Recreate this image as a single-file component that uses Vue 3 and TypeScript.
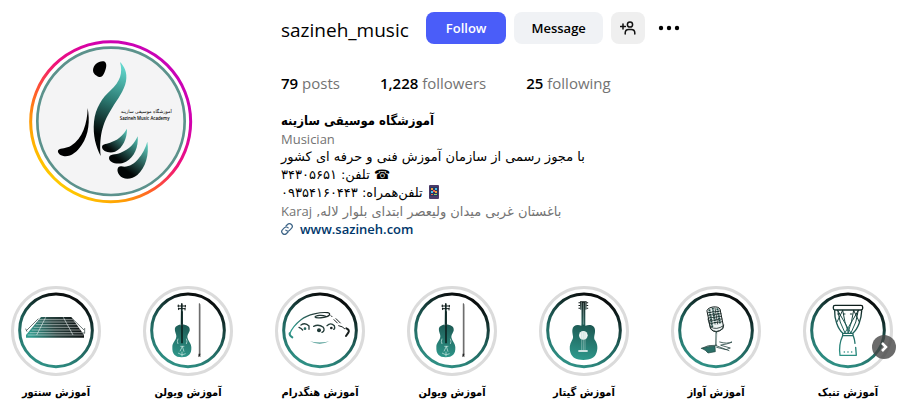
<script setup lang="ts">
type Kind = 'santur' | 'violin' | 'handpan' | 'guitar' | 'mic' | 'tonbak'
interface Highlight {
  kind: Kind
  label: string
}

const stats: { value: string; label: string }[] = [
  { value: '79', label: 'posts' },
  { value: '1,228', label: 'followers' },
  { value: '25', label: 'following' },
]

const highlights: Highlight[] = [
  { kind: 'santur', label: 'آموزش سنتور' },
  { kind: 'violin', label: 'آموزش ویولن' },
  { kind: 'handpan', label: 'آموزش هنگدرام' },
  { kind: 'violin', label: 'آموزش ویولن' },
  { kind: 'guitar', label: 'آموزش گیتار' },
  { kind: 'mic', label: 'آموزش آواز' },
  { kind: 'tonbak', label: 'آموزش تنبک' },
]
</script>

<template>
  <main class="profile">
    <svg class="defs" width="0" height="0" aria-hidden="true">
      <defs>
        <linearGradient id="ring" gradientUnits="userSpaceOnUse" x1="175" y1="40" x2="95" y2="235">
          <stop offset="0" stop-color="#0b0f0f" />
          <stop offset="0.5" stop-color="#1f5f59" />
          <stop offset="1" stop-color="#2f8f84" />
        </linearGradient>
        <linearGradient id="body" gradientUnits="userSpaceOnUse" x1="150" y1="50" x2="115" y2="220">
          <stop offset="0" stop-color="#0b1413" />
          <stop offset="0.4" stop-color="#1d5a54" />
          <stop offset="1" stop-color="#2f9a8d" />
        </linearGradient>
        <linearGradient id="wide" gradientUnits="userSpaceOnUse" x1="60" y1="150" x2="200" y2="100">
          <stop offset="0" stop-color="#2f9a8d" />
          <stop offset="0.5" stop-color="#28423f" />
          <stop offset="1" stop-color="#0d1212" />
        </linearGradient>
      </defs>
    </svg>

    <header class="top">
      <svg class="avatar" viewBox="27 29 492 492" role="img" aria-label="sazineh_music">
        <defs>
          <linearGradient id="story" gradientUnits="userSpaceOnUse" x1="430" y1="80" x2="110" y2="460">
            <stop offset="0" stop-color="#c804b8" />
            <stop offset="0.2" stop-color="#d200ad" />
            <stop offset="0.45" stop-color="#f0127a" />
            <stop offset="0.65" stop-color="#ff5a2c" />
            <stop offset="0.82" stop-color="#ff9c04" />
            <stop offset="1" stop-color="#ffcb00" />
          </linearGradient>
          <linearGradient id="stem" gradientUnits="userSpaceOnUse" x1="310" y1="110" x2="232" y2="310">
            <stop offset="0" stop-color="#62d6cc" />
            <stop offset="0.5" stop-color="#2c7a72" />
            <stop offset="1" stop-color="#020606" />
          </linearGradient>
          <linearGradient id="leaf1" gradientUnits="userSpaceOnUse" x1="318" y1="300" x2="270" y2="358">
            <stop offset="0" stop-color="#55c2b6" />
            <stop offset="1" stop-color="#020606" />
          </linearGradient>
          <linearGradient id="leaf2" gradientUnits="userSpaceOnUse" x1="352" y1="325" x2="300" y2="392">
            <stop offset="0" stop-color="#4db9ad" />
            <stop offset="1" stop-color="#020606" />
          </linearGradient>
          <linearGradient id="leaf3" gradientUnits="userSpaceOnUse" x1="382" y1="345" x2="325" y2="425">
            <stop offset="0" stop-color="#5dcabd" />
            <stop offset="1" stop-color="#020606" />
          </linearGradient>
        </defs>
        <circle cx="272" cy="274" r="240" fill="#fff" stroke="url(#story)" stroke-width="9" />
        <circle cx="273" cy="273" r="221" fill="#f4f4f5" stroke="#5c928c" stroke-width="8" />
        <path d="M219 119C220 103 236 91 251 93C262 96 260 112 254 125C250 136 243 143 235 139C227 135 219 130 219 119Z" />
        <path fill="url(#stem)" d="M300 95C312 107 323 126 318 153C313 181 293 206 275 235C253 270 236 308 242 377C228 350 218 315 222 274C226 234 247 202 272 180C301 153 309 128 300 95Z" />
        <path d="M203 233C210 272 207 312 185 344C171 366 150 381 130 377C117 375 111 364 115 359C123 352 139 355 153 346C188 325 202 279 203 233Z" />
        <path fill="url(#leaf1)" d="M321 295C321 325 309 352 285 364C268 371 246 362 246 350C247 339 262 342 275 335C300 326 312 309 321 295Z" />
        <path fill="url(#leaf2)" d="M353 318C356 350 343 381 318 394C297 405 267 399 267 383C268 369 287 374 302 367C327 358 344 339 353 318Z" />
        <path fill="url(#leaf3)" d="M382 334C388 373 377 412 352 434C336 447 310 450 298 434C289 422 291 407 304 408C323 413 341 402 354 387C368 371 376 354 382 334Z" />
        <text class="logo-fa" x="379" y="248" text-anchor="middle">آموزشگاه موسیقی سازینه</text>
        <text class="logo-en" x="374" y="270" text-anchor="middle">Sazineh Music Academy</text>
      </svg>

      <section class="info">
        <div class="title">
          <h1>sazineh_music</h1>
          <div class="actions">
            <button class="btn follow" type="button">Follow</button>
            <button class="btn message" type="button">Message</button>
            <button class="btn add" type="button" aria-label="Similar accounts">
              <svg width="16" height="16" viewBox="0 0 16 16" fill="none" stroke="#111" stroke-width="1.5" stroke-linecap="round">
                <circle cx="10" cy="4.5" r="2.6" />
                <path d="M5.2 14v-1c0-2.2 1.5-3.5 3.5-3.5h2.6c2 0 3.5 1.3 3.5 3.5v1M3 4v5M.6 6.5h4.8" />
              </svg>
            </button>
            <button class="more" type="button" aria-label="Options">
              <svg width="22" height="6" viewBox="0 0 22 6"><circle cx="3" cy="3" r="2.2" /><circle cx="11" cy="3" r="2.2" /><circle cx="19" cy="3" r="2.2" /></svg>
            </button>
          </div>
        </div>

        <ul class="stats">
          <li v-for="s in stats" :key="s.label"><b>{{ s.value }}</b> {{ s.label }}</li>
        </ul>

        <div class="bio">
          <p class="fa strong" dir="rtl">آموزشگاه موسیقی سازینه</p>
          <p class="muted">Musician</p>
          <p class="fa" dir="rtl">با مجوز رسمی از سازمان آموزش فنی و حرفه ای کشور</p>
          <p class="fa" dir="rtl"><span class="tel">☎</span> تلفن: ۳۴۳۰۵۶۵۱</p>
          <p class="fa" dir="rtl">
            <svg class="phone" width="14" height="14" viewBox="0 0 14 14" aria-hidden="true">
              <rect x="2" width="10" height="14" rx="1" fill="#4a3a68" />
              <rect x="3" y="2" width="8" height="9" fill="#29375f" />
              <path fill="#f3a13b" d="M4 3h2v2H4zM8 6h2v2H8z" />
              <path fill="#4fc0e8" d="M8 3h2v2H8zM4 6h2v2H4z" />
              <path fill="#e8604c" d="M6 5h2v2H6zM4 9h2v1H4z" />
              <path fill="#8fd06a" d="M7 9h3v1H7z" />
            </svg>
            تلفن‌همراه: ۰۹۳۵۴۱۶۰۴۴۳
          </p>
          <p class="fa muted" dir="rtl">باغستان غربی میدان ولیعصر ابتدای بلوار لاله, <span class="latin">Karaj</span></p>
          <a class="link" href="#">
            <svg width="12" height="12" viewBox="0 0 12 12" fill="none" stroke="#3c6386" stroke-width="1.2" stroke-linecap="round">
              <path d="M5 3l1.5-1.5a2.7 2.7 0 0 1 3.9 3.9L8.5 7.3a2.6 2.6 0 0 1-3.7-.1M7 9l-1.5 1.5a2.7 2.7 0 0 1-3.9-3.9l1.9-1.9a2.6 2.6 0 0 1 3.7.1" />
            </svg>
            <span>www.sazineh.com</span>
          </a>
        </div>
      </section>
    </header>

    <nav class="highlights" aria-label="Highlights">
      <a v-for="(h, i) in highlights" :key="i" class="highlight" href="#">
        <svg class="cover" viewBox="0 0 270 270" aria-hidden="true">
          <circle cx="135" cy="135" r="130.5" fill="#fff" stroke="#dbdbdb" stroke-width="9" />
          <circle cx="135" cy="133" r="109" fill="none" stroke="url(#ring)" stroke-width="9" />

          <g v-if="h.kind === 'santur'">
            <path fill="url(#wide)" d="M90 93H181L219 147V155H45V147Z" />
            <path fill="none" stroke="#fff" stroke-opacity=".75" stroke-width="2" d="M84 101H187M79 108H192M74 116H197M68 124H203M62 132H208M56 140H214M50 147H218" />
            <path fill="none" stroke="#dfe9e8" stroke-width="2" d="M104 94L77 147M157 94L186 147" />
            <path fill="none" stroke="#4e5b5a" stroke-width="2.5" d="M82 98L45 135M44 128l4 9M184 98L219 132M221 126v16M213 141h9" />
          </g>

          <g v-else-if="h.kind === 'violin'">
            <path fill="url(#body)" d="M114 53q2-4 5 0v65h-6zM107 117C98 120 94 125 96 135C98 144 102 148 99 157C95 167 88 171 88 184C87 204 96 214 116 214C137 214 146 204 145 184C144 171 137 167 134 157C131 148 137 143 140 134C142 124 135 119 127 117C120 115 113 115 107 117Z" />
            <path fill="none" stroke="#111c1b" stroke-width="3" stroke-linecap="round" d="M105 60h22M106 68h20M106 57v5M127 58v5M107 66v5M126 67v5" />
            <path fill="none" stroke="#0c2522" stroke-width="5" d="M117 76V172" />
            <path fill="none" stroke="#d6eeea" stroke-width="2" d="M112 181h12M118 181l-7 15M118 181l5 16M105 158q-4 8 0 16M130 158q4 8 0 16M105 201q12 10 23 2M117 197v14" />
            <path fill="none" stroke="#333" stroke-width="2.5" d="M169 53V209" />
            <path fill="none" stroke="#555" stroke-width="1.5" d="M168 51q4 2 4 10V206" />
            <path d="M167 203h5v11l-3-3-3 3z" fill="#222" />
          </g>

          <g v-else-if="h.kind === 'handpan'" fill="none" stroke-linecap="round">
            <path stroke="url(#wide)" stroke-width="3.5" d="M44 143C50 129 60 115 78 101C99 85 137 78 158 80C169 82 165 91 147 94C136 96 121 96 120 93C122 88 142 86 152 91" />
            <path stroke="#2f8f84" stroke-width="6" d="M44 142C43 146 47 151 52 154" />
            <path stroke="#1a2221" stroke-width="3" d="M177 101l10 10M183 98l13 13M191 119q12 2 18 9M168 89l3 3" />
            <path stroke="#161d1c" stroke-width="6" d="M214 127q11 5 6 13l-7 10" />
            <path stroke="#263f3c" stroke-width="4" d="M78 117q13-9 24 3v10M116 121q15-8 29 3 6 10-4 15M156 119q11-11 22 0 3 9-2 11M72 124q7 3 11 8" />
            <circle cx="90" cy="128" r="4" fill="#23645d" /><circle cx="132" cy="133" r="6" fill="#1e3936" /><circle cx="169" cy="126" r="4" fill="#1c2423" />
            <path fill="#46978f" d="M105 166Q134 173 163 166Q134 180 105 166Z" />
          </g>

          <g v-else-if="h.kind === 'guitar'">
            <path fill="url(#body)" d="M123 46h20l-1 25h-3v48c15-5 28-1 29 13 1 15-6 21 0 31 9 13 8 26 5 36-5 18-20 23-40 23s-34-6-39-23c-3-11-3-23 5-36 7-10 0-17 1-31 1-14 14-18 27-13V71h-3z" />
            <path fill="none" stroke="#c8dedb" stroke-width="1.5" d="M127 48v68M133 50v66M139 48v68" />
            <path fill="none" stroke="#0f1918" stroke-width="5" stroke-dasharray="3 5" d="M121 49v20M145 49v20" />
            <circle cx="133" cy="148" r="13" fill="#eef5f4" />
            <path fill="none" stroke="#b9d6d2" stroke-width="1.5" d="M128 137v56M133 137v56M138 137v56" />
            <path stroke="#eef5f4" stroke-width="5" d="M118 195h28" />
          </g>

          <g v-else-if="h.kind === 'mic'" fill="none" stroke-linecap="round">
            <path fill="#eef4f3" stroke="#17211f" stroke-width="3" d="M108 73C111 62 141 58 147 69L157 119C156 137 126 144 119 128Z" />
            <path stroke="#1d4640" stroke-width="6" stroke-dasharray="5 2" stroke-linecap="butt" d="M115 70l9 53M125 66l8 49M139 67l8 45" />
            <path stroke="#1c2e2b" stroke-width="2.5" d="M111 80l37-5M112 88l38-5M114 96l37-5M116 104l37-5M118 112l36-5M132 66l8 48M119 123q18 11 38-4M111 99l8 29q15 17 37 0l2-11" />
            <path stroke="#45625e" stroke-width="5" d="M136 139l-1 39" />
            <path stroke="#fff" stroke-width="1.5" d="M136 143v31" />
            <path fill="#2b6f67" stroke="#1d4640" stroke-width="2" d="M92 187q20-7 40-7l1 17-22 4q-5-8-19-14Z" />
            <path stroke="#2e4d49" stroke-width="2.5" d="M92 187q21-12 41-9l41 16M137 184l28 7 13-5-28-8M146 168q23 7 36 0M150 177q18-2 32-8" />
          </g>

          <g v-else fill="none" stroke="url(#body)" stroke-width="4" stroke-linejoin="round" stroke-linecap="round">
            <rect x="91" y="58" width="88" height="14" rx="5" />
            <path d="M95 74C94 98 104 129 119 141M176 74C175 100 165 129 150 141M119 142h31v7h-31zM119 149C111 166 108 188 111 208H160L158 184M151 150q4 10 5 22" />
            <path stroke-width="3" d="M104 73q4 36 22 68M166 73q-4 36-22 68M104 73q14 25 39 67M166 73q-15 27-40 67M119 73q5 36 17 67M152 73q-5 37-17 67M119 73l-17 35M152 73l17 35M104 84h5M121 84h5M142 84h5M159 84h5" />
            <path stroke="#2f8f84" stroke-width="5" d="M124 198h0M135 198h0M146 198h0" />
          </g>
        </svg>
        <span class="caption" dir="rtl">{{ h.label }}</span>
      </a>
      <button class="next" type="button" aria-label="Next">
        <svg width="24" height="24" viewBox="0 0 24 24" fill="none" stroke="#fff" stroke-width="2.5"><path d="M10 8l4 4-4 4" /></svg>
      </button>
    </nav>
  </main>
</template>

<style>
body {
  background: #fff;
}
</style>

<style scoped>
.profile {
  font-family: "Open Sans", "Noto Sans", "DejaVu Sans", sans-serif;
  font-size: 13px;
  line-height: 18px;
  color: #000;
  overflow: hidden;
}
.defs {
  display: block;
}
.top {
  display: flex;
  align-items: flex-start;
  padding: 12px 16px 0 29px;
}
.avatar {
  flex: none;
  width: 164px;
  height: 164px;
  margin-top: 28px;
  margin-right: 88px;
}
.logo-fa {
  font: 400 14px "DejaVu Sans", sans-serif;
}
.logo-en {
  font: 600 13px "Open Sans", sans-serif;
}
.info {
  flex: 1;
  min-width: 0;
}
.title {
  display: flex;
  align-items: center;
  gap: 17px;
}
h1 {
  margin: 0;
  padding-top: 4px;
  font-size: 19px;
  font-weight: 400;
  line-height: 28px;
}
.actions {
  display: flex;
  align-items: center;
  gap: 8px;
}
button {
  border: 0;
  font-family: inherit;
  cursor: pointer;
}
.btn {
  height: 32px;
  padding: 0 17px;
  border-radius: 8px;
  font-size: 13px;
  font-weight: 600;
  line-height: 18px;
  color: #000;
}
.follow {
  padding: 0 20px;
  background: #4a5df9;
  color: #fff;
}
.message {
  background: #f0f2f5;
}
.add {
  display: flex;
  align-items: center;
  padding: 0 9px;
  background: #efefef;
}
.more {
  display: flex;
  padding: 8px 5px;
  background: none;
}
.stats {
  display: flex;
  gap: 40px;
  margin: 28px 0 0;
  padding: 0;
  list-style: none;
  font-size: 15px;
  line-height: 22px;
  color: #737373;
}
.stats b {
  font-weight: 600;
  color: #000;
}
.bio {
  margin-top: 18px;
}
.bio p {
  margin: 0;
  height: 18px;
  text-align: left;
  white-space: nowrap;
}
.fa {
  font-family: "DejaVu Sans", sans-serif;
}
.strong {
  font-family: "DejaVu Sans Condensed", "DejaVu Sans", sans-serif;
  font-weight: 700;
}
.muted {
  color: #737373;
}
.latin {
  font-family: "Open Sans", sans-serif;
}
.tel {
  font-weight: 700;
}
.phone {
  vertical-align: -2px;
}
.link {
  display: inline-flex;
  align-items: center;
  gap: 7px;
  color: #00376b;
  font-weight: 600;
  text-decoration: none;
}
.highlights {
  position: relative;
  display: flex;
  justify-content: space-between;
  padding: 0 13px 0 11px;
  margin-top: 47px;
}
.highlight {
  display: flex;
  flex-direction: column;
  align-items: center;
  width: 90px;
  color: #000;
  text-decoration: none;
}
.cover {
  width: 90px;
  height: 90px;
}
.caption {
  margin-top: 8px;
  font-family: "DejaVu Sans Condensed", "DejaVu Sans", sans-serif;
  font-size: 11px;
  font-weight: 700;
  line-height: 18px;
  white-space: nowrap;
}
.next {
  position: absolute;
  right: 10px;
  top: 49px;
  display: flex;
  padding: 0;
  border-radius: 50%;
  background: rgba(70, 70, 70, 0.8);
}
</style>
